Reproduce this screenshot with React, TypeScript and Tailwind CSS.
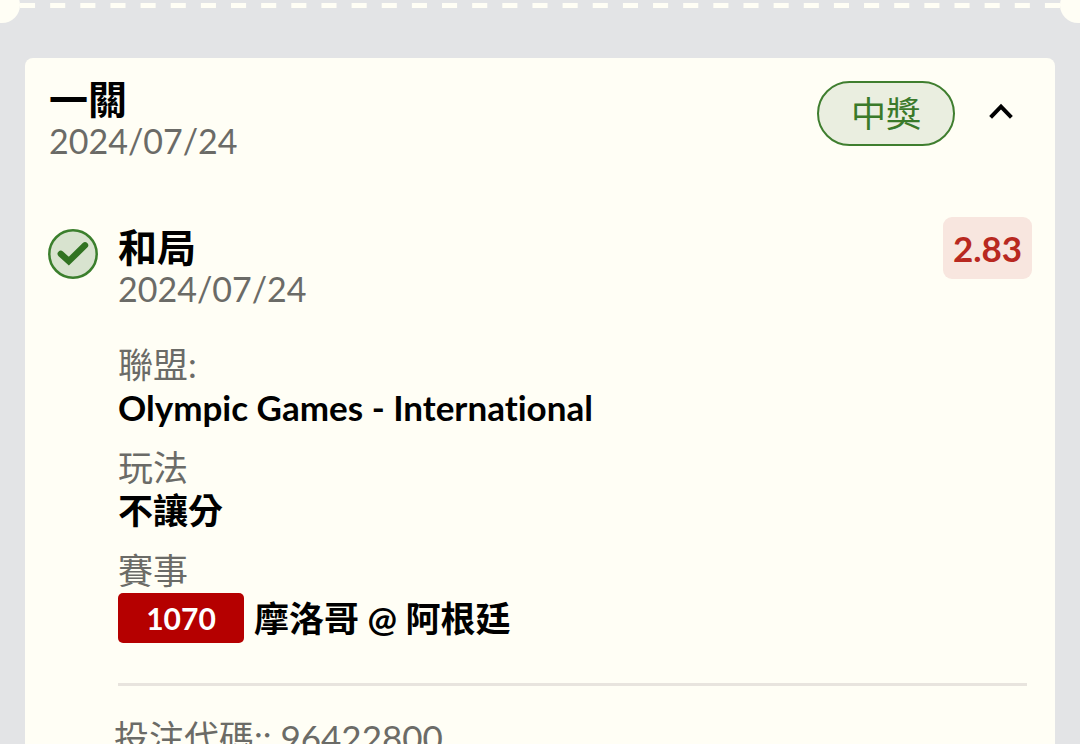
type LegDetail = {
  label: string;
  value: string;
};

const details: LegDetail[] = [
  { label: "聯盟:", value: "Olympic Games - International" },
  { label: "玩法", value: "不讓分" },
];

function TicketDivider() {
  return (
    <div className="flex h-[23px] items-start overflow-hidden">
      <div className="-mt-[13px] -ml-4 h-9 w-9 shrink-0 rounded-full bg-[#fffef5]" />
      <svg className="h-[11px] min-w-0 flex-1" aria-hidden="true">
        <line
          x1="0"
          y1="5.5"
          x2="100%"
          y2="5.5"
          pathLength="69"
          strokeDasharray="1 1"
          stroke="#fffef5"
          strokeWidth="5"
        />
      </svg>
      <div className="-mt-[13px] -mr-4 h-9 w-9 shrink-0 rounded-full bg-[#fffef5]" />
    </div>
  );
}

function WonIcon() {
  return (
    <svg className="h-[50px] w-[50px] shrink-0" viewBox="0 0 50 50" fill="none">
      <circle
        cx="25"
        cy="25"
        r="23.7"
        fill="#d8e3cf"
        stroke="#3b7f2d"
        strokeWidth="2.5"
      />
      <path
        d="M12.8 24.8 20.8 32.2 37 16.3"
        stroke="#317322"
        strokeWidth="6.4"
        strokeLinecap="round"
      />
    </svg>
  );
}

function Heading({ title, date }: { title: string; date: string }) {
  return (
    <div className="min-w-0 flex-1">
      <h2 className="text-[39px] leading-[42px] font-bold text-black">
        {title}
      </h2>
      <p className="text-[34px] leading-[42px] text-[#6b6b67]">{date}</p>
    </div>
  );
}

function BetLeg() {
  return (
    <section className="mt-16 flex items-start gap-5">
      <div className="-ml-px pt-[3px]">
        <WonIcon />
      </div>
      <div className="min-w-0 flex-1">
        <div className="flex items-start">
          <Heading title="和局" date="2024/07/24" />
          <span className="-mt-[9px] -mr-px flex h-[62px] w-[89px] items-center justify-center rounded-[9px] bg-[#f8e6df] text-[35px] font-bold text-[#b82820]">
            2.83
          </span>
        </div>
        <dl className="mt-[33px] flex flex-col gap-[17px] text-[35px] leading-[43px]">
          {details.map((detail) => (
            <div key={detail.label}>
              <dt className="text-[#6b6b67]">{detail.label}</dt>
              <dd className="font-bold text-black [font-variant-ligatures:none]">
                {detail.value}
              </dd>
            </div>
          ))}
          <div>
            <dt className="text-[#6b6b67]">賽事</dt>
            <dd className="flex items-center gap-2.5 pt-px font-bold text-black">
              <span className="flex h-[50px] w-[126px] items-center justify-center rounded-[5px] bg-[#b50000] text-[30px] text-white">
                1070
              </span>
              摩洛哥 @ 阿根廷
            </dd>
          </div>
        </dl>
        <hr className="mt-10 mr-1 border-t-3 border-[#e8e4de]" />
      </div>
    </section>
  );
}

function App() {
  return (
    <main
      lang="zh-Hant"
      className="h-screen overflow-hidden bg-[#e3e4e6] font-['Lato','Noto_Sans_CJK_TC',sans-serif]"
    >
      <TicketDivider />
      <article className="mx-[25px] mt-[35px] min-h-screen rounded-lg bg-[#fffef5] px-6 pt-5">
        <header className="flex items-start">
          <Heading title="一關" date="2024/07/24" />
          <span className="mt-[3px] flex h-[65px] w-[138px] items-center justify-center rounded-full border-2 border-[#3f7e2f] bg-[#eaeee0] text-[35px] text-[#3a7a2a]">
            中獎
          </span>
          <button
            type="button"
            aria-label="收合"
            className="mt-2.5 mr-2 ml-6 flex h-12 w-11 items-center justify-center"
          >
            <svg className="h-6 w-6" viewBox="0 0 24 24" fill="none">
              <path d="M1.6 17.4 12 6.7 22.4 17.4" stroke="black" strokeWidth="4" />
            </svg>
          </button>
        </header>
        <BetLeg />
        <p className="mt-[30px] ml-[65px] text-[35px] leading-[43px] text-[#6b6b67]">
          投注代碼:: 96422800
        </p>
      </article>
    </main>
  );
}

export default App;
